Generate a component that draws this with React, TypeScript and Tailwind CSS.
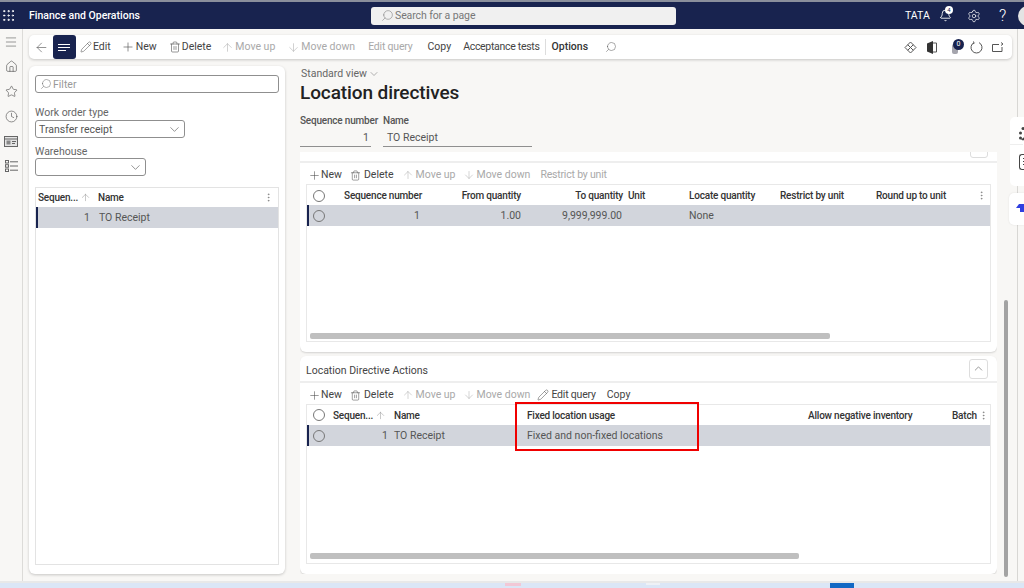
import React from "react";
import {
  ArrowDown,
  ArrowLeft,
  ArrowUp,
  ChevronDown,
  ChevronUp,
  Clock,
  EllipsisVertical,
  Grip,
  Home,
  Menu,
  Pencil,
  Plus,
  Search,
  Settings,
  Star,
  Trash2,
  Bell,
} from "lucide-react";

const font = { fontFamily: 'Roboto, "Noto Sans", sans-serif' };

function Tool({
  icon,
  label,
  off,
  className = "",
}: {
  icon?: React.ReactNode;
  label: string;
  off?: boolean;
  className?: string;
}) {
  return (
    <span
      className={`flex items-center whitespace-nowrap ${off ? "text-[#a9a9a9]" : "text-[#444]"} ${className}`}
    >
      {icon}
      {label}
    </span>
  );
}

function Radio({ className }: { className: string }) {
  return <span className={`block w-[12px] h-[12px] rounded-full border border-[#777] ${className}`} />;
}

function Combo({ value, className }: { value: string; className: string }) {
  return (
    <div
      className={`flex items-center justify-between h-[18px] rounded-[3px] border border-[#8f8f8f] bg-white pl-[3px] pr-[2px] text-[#555] ${className}`}
    >
      <span className="pt-px">{value}</span>
      <ChevronDown size={15} strokeWidth={1} className="text-[#555]" />
    </div>
  );
}

function SectionTools({ children }: { children: React.ReactNode }) {
  return <div className="h-[21px] shrink-0 flex items-center pl-[2px] pt-[3px]">{children}</div>;
}

export default function App() {
  return (
    <div
      style={font}
      className="w-[1024px] h-[588px] overflow-hidden relative flex flex-col bg-[#f8f7f5] text-[10.5px] text-[#444]"
    >
      <div className="h-[2px] bg-[#8a8f9c]" />
      {/* top bar */}
      <header className="h-[27px] shrink-0 bg-[#18234f] text-white flex items-center pl-[1px] overflow-hidden">
        <Grip size={15} strokeWidth={1.6} className="shrink-0" />
        <span className="ml-[13px] font-medium w-[342px] shrink-0 whitespace-nowrap">Finance and Operations</span>
        <div className="w-[305px] shrink-0 h-[18px] rounded-[3px] bg-[#f0f0f0] flex items-center pl-[10px] text-[#777] tracking-[-0.1px]">
          <Search size={13} strokeWidth={1} className="-scale-x-100 mr-[1px]" />
          Search for a page
        </div>
        <span className="ml-[229px] w-[22px] shrink-0">TATA</span>
        <span className="ml-[12px] relative shrink-0">
          <Bell size={13} strokeWidth={1.6} />
          <span className="absolute -top-[3px] left-[6px] w-[8px] h-[8px] rounded-full bg-white text-[#18234f] text-[6px] leading-[8px] text-center">
            4
          </span>
        </span>
        <Settings size={14} strokeWidth={1.2} className="ml-[15px] shrink-0" />
        <span className="ml-[18px] text-[16px] font-light leading-none shrink-0">?</span>
        <span className="ml-[12px] w-[14px] h-[20px] rounded-l-full bg-[#e4e4e4] shrink-0" />
      </header>

      <div className="flex-1 flex min-h-0">
        {/* nav rail */}
        <nav className="w-[23px] shrink-0 border-r border-[#dcdbd8] flex flex-col items-center pt-[6px] text-[#555]">
          <Menu size={14} strokeWidth={1} />
          <Home size={13} strokeWidth={1.2} className="mt-[11px]" />
          <Star size={13} strokeWidth={1.2} className="mt-[12px]" />
          <Clock size={13} strokeWidth={1.2} className="mt-[12px]" />
          <svg width="14" height="11" viewBox="0 0 14 11" fill="none" className="mt-[13px]">
            <rect x="0.5" y="0.5" width="13" height="10" fill="#e4e4e4" stroke="#666" />
            <path d="M0.5 3h13" stroke="#666" />
            <rect x="2.5" y="4.5" width="4" height="4" fill="#888" />
            <path d="M8 5.5h4M8 7.5h3" stroke="#666" />
          </svg>
          <svg width="13" height="12" viewBox="0 0 13 12" fill="none" stroke="#666" className="mt-[13px]">
            <rect x="0.5" y="0.5" width="3" height="2.5" />
            <rect x="0.5" y="4.7" width="3" height="2.5" />
            <rect x="0.5" y="9" width="3" height="2.5" />
            <path d="M5 1.8h8M5 6h8M5 10.2h8" />
          </svg>
        </nav>

        <main className="w-[995px] shrink-0 border-r border-[#d8d7d4] flex flex-col min-h-0 pl-[6px] pt-[6px] pb-[7px]">
          {/* action bar */}
          <div className="w-[983px] h-[24px] shrink-0 bg-white rounded-[5px] shadow-[0_1px_3px_rgba(0,0,0,0.2)] flex items-center">
            <ArrowLeft size={15} strokeWidth={1} className="ml-[5px] text-[#555]" />
            <span className="ml-[4px] w-[23px] h-[24px] rounded-[3px] bg-[#18234f] flex flex-col gap-[2px] items-start justify-center pl-[5px]">
              <span className="block w-[12px] h-px bg-white" />
              <span className="block w-[12px] h-px bg-white" />
              <span className="block w-[8px] h-px bg-white" />
            </span>
            <Tool className="ml-[4px] gap-px" icon={<Pencil size={12} strokeWidth={1} />} label="Edit" />
            <Tool className="ml-[10px] gap-px" icon={<Plus size={14} strokeWidth={1} />} label="New" />
            <Tool className="ml-[12px] gap-px" icon={<Trash2 size={12} strokeWidth={1.1} />} label="Delete" />
            <Tool className="ml-[10px] gap-px" off icon={<ArrowUp size={13} strokeWidth={1} />} label="Move up" />
            <Tool className="ml-[12px] gap-px" off icon={<ArrowDown size={13} strokeWidth={1} />} label="Move down" />
            <Tool className="ml-[13px] tracking-[-0.2px]" off label="Edit query" />
            <Tool className="ml-[15px]" label="Copy" />
            <Tool className="ml-[12px] tracking-[-0.3px]" label="Acceptance tests" />
            <span className="ml-[5px] w-px h-[16px] bg-[#ddd]" />
            <span className="ml-[6px] font-medium text-[#333]">Options</span>
            <Search size={12} strokeWidth={1} className="ml-[17px] -scale-x-100 text-[#555]" />
            <span className="flex-1" />
            <svg width="13" height="13" viewBox="0 0 13 13" fill="none" stroke="#555" className="mr-[10px]">
              <path d="M6.5 1 12 6.5 6.5 12 1 6.5Z" />
              <path d="M3.7 3.7l5.6 5.6M9.3 3.7 3.7 9.3" />
            </svg>
            <svg width="10" height="13" viewBox="0 0 10 13" className="mr-[15px]">
              <path d="M0 2.5 6 0v13L0 10.5Z" fill="#333" />
              <path d="M6 2h3.5v9H6" fill="none" stroke="#555" />
            </svg>
            <span className="relative mr-[7px] w-[11px] h-[14px]">
              <span className="absolute left-0 top-[4px] w-[6px] h-[10px] rounded-[2px] bg-[#a5a5ad]" />
              <span className="absolute left-[1px] -top-[1px] w-[11px] h-[11px] rounded-full bg-[#18234f] text-white text-[7px] leading-[11px] text-center">
                0
              </span>
            </span>
            <svg width="13" height="13" viewBox="0 0 13 13" fill="none" stroke="#555" className="mr-[9px]">
              <path d="M4 1.6a5.5 5.5 0 1 0 5 0" />
              <path d="M3 .5l1.4 1.3L3 3.2" />
            </svg>
            <svg width="12" height="11" viewBox="0 0 12 11" fill="none" stroke="#555" className="mr-[8px]">
              <path d="M7 2.5H.5v7H10V5" />
              <path d="M9 .5l2 1.5-2 1.5" />
            </svg>
          </div>

          <div className="flex-1 flex min-h-0 mt-[7px]">
            {/* left list panel */}
            <aside className="w-[256px] shrink-0 bg-white rounded-[6px] shadow-[0_1px_3px_rgba(0,0,0,0.2)] px-[6px] pt-[9px] pb-[9px] flex flex-col">
              <div className="w-[244px] h-[18px] rounded-[3px] border border-[#8f8f8f] flex items-center pl-[4px] text-[#999]">
                <Search size={12} strokeWidth={1} className="-scale-x-100 mr-[1px] text-[#666]" />
                <span className="pt-px">Filter</span>
              </div>
              <div className="mt-[13px] leading-[13px] text-[#666]">Work order type</div>
              <Combo className="w-[150px] mt-px" value="Transfer receipt" />
              <div className="mt-[7px] leading-[13px] text-[#666]">Warehouse</div>
              <Combo className="w-[111px]" value="" />
              <div className="mt-[11px] flex-1 border border-[#e3e3e3]">
                <div className="h-[19px] flex items-center font-medium text-[#333] text-[10px] tracking-[-0.2px]">
                  <span className="ml-[2px] w-[41px] whitespace-nowrap">Sequen...</span>
                  <ArrowUp size={11} strokeWidth={1} className="ml-px text-[#888]" />
                  <span className="ml-[7px]">Name</span>
                  <EllipsisVertical size={11} strokeWidth={1} className="ml-auto mr-[4px] text-[#555]" />
                </div>
                <div className="h-[21px] pt-px bg-[#d2d5dc] border-l-[2px] border-[#18234f] flex items-center text-[#555]">
                  <span className="w-[52px] text-right">1</span>
                  <span className="ml-[9px]">TO Receipt</span>
                </div>
              </div>
            </aside>

            {/* details */}
            <section className="ml-[15px] w-[697px] flex flex-col min-h-0">
              <div className="h-[86px] shrink-0">
                <div className="mt-px ml-px flex items-center text-[#666] leading-[14px]">
                  Standard view
                  <ChevronDown size={12} strokeWidth={1} className="ml-px" />
                </div>
                <h1 className="text-[19px] tracking-[-0.1px] leading-[24px] font-medium text-[#222]">Location directives</h1>
                <div className="flex gap-[12px] mt-[9px]">
                  <div className="w-[71px]">
                    <div className="text-[10px] tracking-[-0.2px] leading-[14px] font-medium text-[#555] whitespace-nowrap">Sequence number</div>
                    <div className="h-[19px] leading-[19px] text-right pr-[2px] border-b border-[#8f8f8f] text-[#555]">1</div>
                  </div>
                  <div className="w-[149px]">
                    <div className="text-[10px] tracking-[-0.2px] leading-[14px] font-medium text-[#555]">Name</div>
                    <div className="h-[19px] leading-[19px] pl-[4px] border-b border-[#8f8f8f] text-[#555]">TO Receipt</div>
                  </div>
                </div>
              </div>

              <div className="flex-1 min-h-0 overflow-hidden flex flex-col gap-[4px]">
                {/* Lines, scrolled under the header */}
                <div className="h-[216px] shrink-0 -mt-[16px] bg-white rounded-[6px] shadow-[0_1px_2px_rgba(0,0,0,0.15)] flex flex-col">
                  <div className="h-[27px] shrink-0 border-b-2 border-[#eeeeee] flex items-center pl-[6px] pr-[9px] justify-between">
                    <span className="pt-px">Lines</span>
                    <span className="w-[18px] h-[18px] rounded-[3px] border border-[#ddd] flex items-center justify-center">
                      <ChevronUp size={12} strokeWidth={1} />
                    </span>
                  </div>
                  <SectionTools>
                    <Tool className="ml-[6px]" icon={<Plus size={13} strokeWidth={1} />} label="New" />
                    <Tool className="ml-[8px] gap-[3px]" icon={<Trash2 size={11} strokeWidth={1.1} />} label="Delete" />
                    <Tool className="ml-[8px] gap-[2px]" off icon={<ArrowUp size={12} strokeWidth={1} />} label="Move up" />
                    <Tool className="ml-[7px] gap-[2px]" off icon={<ArrowDown size={12} strokeWidth={1} />} label="Move down" />
                    <Tool className="ml-[10px] tracking-[-0.2px]" off label="Restrict by unit" />
                  </SectionTools>
                  <div className="mx-[6px] flex-1 border border-[#e8e8e8] mb-[10px] flex flex-col relative">
                    <div className="h-[20px] pt-px grid grid-cols-[32px_85px_99px_102px_64px_91px_96px_100px_1fr] items-center font-medium text-[#333] text-[10px] tracking-[-0.2px] whitespace-nowrap">
                      <Radio className="ml-[6px]" />
                      <span className="text-right pr-[2px]">Sequence number</span>
                      <span className="text-right pr-[2px]">From quantity</span>
                      <span className="text-right pr-[2px]">To quantity</span>
                      <span className="pl-[3px]">Unit</span>
                      <span>Locate quantity</span>
                      <span>Restrict by unit</span>
                      <span>Round up to unit</span>
                      <EllipsisVertical size={11} strokeWidth={1} className="text-[#555]" />
                    </div>
                    <div className="h-[21px] pt-px bg-[#d2d5dc] border-l-[2px] border-[#18234f] grid grid-cols-[30px_85px_99px_102px_64px_91px] items-center text-[#555]">
                      <Radio className="ml-[4px]" />
                      <span className="text-right pr-[4px]">1</span>
                      <span className="text-right pr-[2px]">1.00</span>
                      <span className="text-right pr-[3px]">9,999,999.00</span>
                      <span />
                      <span>None</span>
                    </div>
                    <div className="absolute left-[3px] bottom-[2px] w-[520px] h-[6px] rounded-[2px] bg-[#bfbfbf]" />
                  </div>
                </div>

                {/* Location Directive Actions */}
                <div className="flex-1 bg-white rounded-[6px] shadow-[0_1px_2px_rgba(0,0,0,0.15)] flex flex-col min-h-0">
                  <div className="h-[27px] shrink-0 border-b-2 border-[#eeeeee] flex items-center pl-[6px] pr-[9px] justify-between">
                    <span className="text-[#444] pt-[4px]">Location Directive Actions</span>
                    <span className="w-[19px] h-[20px] rounded-[3px] border border-[#ddd] flex items-center justify-center">
                      <ChevronUp size={13} strokeWidth={1} />
                    </span>
                  </div>
                  <SectionTools>
                    <Tool className="ml-[6px]" icon={<Plus size={13} strokeWidth={1} />} label="New" />
                    <Tool className="ml-[8px] gap-[3px]" icon={<Trash2 size={11} strokeWidth={1.1} />} label="Delete" />
                    <Tool className="ml-[8px] gap-[2px]" off icon={<ArrowUp size={12} strokeWidth={1} />} label="Move up" />
                    <Tool className="ml-[7px] gap-[2px]" off icon={<ArrowDown size={12} strokeWidth={1} />} label="Move down" />
                    <Tool className="ml-[7px] gap-[2px] tracking-[-0.2px]" icon={<Pencil size={12} strokeWidth={1} />} label="Edit query" />
                    <Tool className="ml-[11px]" label="Copy" />
                  </SectionTools>
                  <div className="mx-[6px] flex-1 border border-[#e8e8e8] mb-[10px] flex flex-col relative">
                    <div className="h-[20px] grid grid-cols-[26px_57px_137px_281px_144px_26px_1fr] items-center font-medium text-[#333] text-[10px] tracking-[-0.2px] whitespace-nowrap">
                      <Radio className="ml-[6px]" />
                      <span className="flex items-center">
                        Sequen...
                        <ArrowUp size={11} strokeWidth={1} className="ml-[2px] text-[#888]" />
                      </span>
                      <span className="pl-[4px]">Name</span>
                      <span>Fixed location usage</span>
                      <span>Allow negative inventory</span>
                      <span>Batch</span>
                      <EllipsisVertical size={11} strokeWidth={1} className="text-[#555]" />
                    </div>
                    <div className="h-[21px] pt-px bg-[#d2d5dc] border-l-[2px] border-[#18234f] grid grid-cols-[24px_57px_137px_1fr] items-center text-[#555]">
                      <Radio className="ml-[4px]" />
                      <span className="text-right pr-[2px]">1</span>
                      <span className="pl-[4px]">TO Receipt</span>
                      <span>Fixed and non-fixed locations</span>
                    </div>
                    <div className="absolute left-[3px] bottom-[4px] w-[489px] h-[6px] rounded-[2px] bg-[#bfbfbf]" />
                    {/* red annotation box */}
                    <div className="absolute left-[208px] -top-[3px] w-[184px] h-[49px] border-[2.5px] border-[#f00000]" />
                  </div>
                </div>
              </div>
            </section>

            {/* page scrollbar */}
            <div className="ml-[7px] w-[4px] flex flex-col justify-end">
              <div className="h-[277px] bg-[#a3a3a3] rounded-[2px] -mb-[3px]" />
            </div>
          </div>
        </main>
      </div>

      {/* taskbar sliver */}
      <div className="h-[2px] shrink-0 bg-[#e8e8e8]" />
      <div className="h-[5px] shrink-0 bg-[#dbe6f6] flex items-start">
        <span className="ml-[505px] w-[16px] h-[3px] bg-[#f2c8d6]" />
        <span className="ml-[125px] w-[14px] h-[2px] bg-[#eef1f6]" />
        <span className="ml-[170px] w-[24px] h-[5px] bg-[#1268c4]" />
      </div>

      {/* floating side tabs */}
      <div className="absolute left-[1010px] top-[117px] w-[14px] h-[69px] rounded-l-[5px] bg-white pt-[10px] pl-[9px]">
        <svg width="8" height="14" viewBox="0 0 8 14" fill="#444">
          <circle cx="4" cy="1.5" r="1.5" />
          <circle cx="1.5" cy="6" r="1.5" />
          <circle cx="6" cy="6" r="1" />
          <circle cx="1.5" cy="11" r="1.5" />
          <path d="M2 12.5 8 8v3l-4 2.5Z" />
        </svg>
        <div className="mt-[3px] w-[13px] border-t border-[#eee] -ml-[9px]" />
        <div className="mt-[9px] w-[9px] h-[16px] rounded-l-[3px] border-l border-y border-[#444] flex flex-col gap-[2px] pl-[3px] pt-[3px]">
          <span className="block w-[3px] h-px bg-[#444]" />
          <span className="block w-[3px] h-px bg-[#444]" />
          <span className="block w-[3px] h-px bg-[#444]" />
        </div>
      </div>
      <div className="absolute left-[1009px] top-[193px] w-[15px] h-[32px] rounded-l-[5px] bg-white shadow-[0_0_2px_rgba(0,0,0,0.1)] pt-[11px] pl-[7px]">
        <svg width="8" height="8" viewBox="0 0 8 8" fill="#2f3fe0">
          <path d="M0 4 3 0h5v8H4V4Z" />
        </svg>
      </div>
    </div>
  );
}
